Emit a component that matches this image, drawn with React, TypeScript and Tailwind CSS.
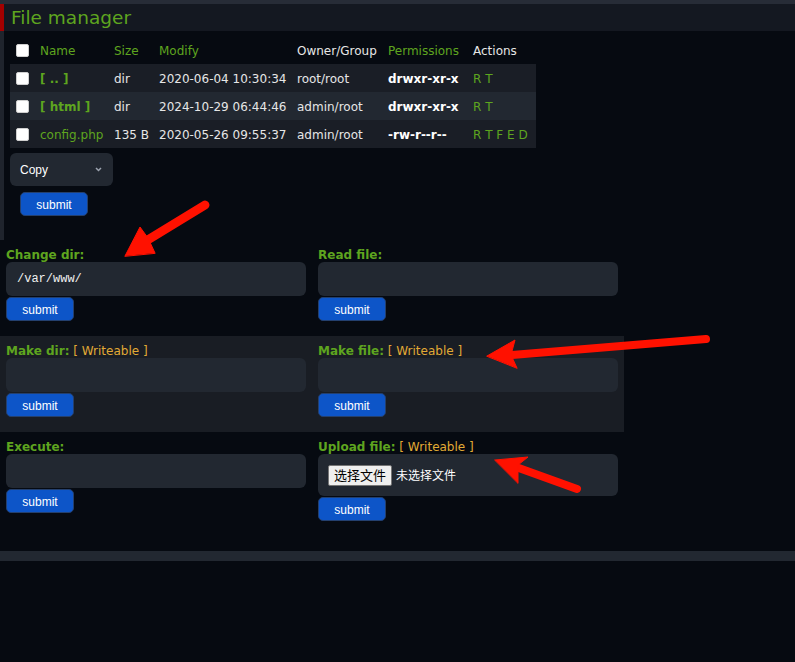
import React from "react";

const rows = [
  { name: "[ .. ]", dir: true, size: "dir", modify: "2020-06-04 10:30:34", owner: "root/root", perms: "drwxr-xr-x", actions: ["R", "T"] },
  { name: "[ html ]", dir: true, size: "dir", modify: "2024-10-29 06:44:46", owner: "admin/root", perms: "drwxr-xr-x", actions: ["R", "T"] },
  { name: "config.php", dir: false, size: "135 B", modify: "2020-05-26 09:55:37", owner: "admin/root", perms: "-rw-r--r--", actions: ["R", "T", "F", "E", "D"] },
];

const cols = "grid grid-cols-[24px_74px_45px_138px_91px_85px_69px] h-[28px] items-center pt-[2px]";

function Check() {
  return <span className="mx-auto -mt-[2px] block w-[13px] h-[13px] bg-white rounded-[2px] border border-[#cfcfcf]" />;
}

function Submit({ className = "" }: { className?: string }) {
  return (
    <button className={`w-[68px] h-[24px] pt-[2px] rounded-[5px] bg-[#0d55c8] border border-[#24406e] text-white text-[12px] font-['Liberation_Sans',sans-serif] ${className}`}>
      submit
    </button>
  );
}

function Field({ label, writeable, value, children }: { label: string; writeable?: boolean; value?: string; children?: React.ReactNode }) {
  return (
    <div className="pt-[6px] px-[6px]">
      <div className="h-[16px] leading-[18px] text-[12px]">
        <span className="font-bold text-[#5ea51f]">{label}</span>
        {writeable && <span className="text-[#e2aa35]"> [ Writeable ]</span>}
      </div>
      {children ?? (
        <div className="h-[34px] w-[300px] rounded-[6px] bg-[#222831] flex items-center pl-[11px] font-['Liberation_Mono',monospace] text-[12px] text-[#f0f0f0]">
          {value}
        </div>
      )}
      <Submit className="mt-[1px]" />
    </div>
  );
}

export default function App() {
  return (
    <div className="relative min-h-[662px] bg-[#060a11] font-['DejaVu_Sans',sans-serif] text-[12px] text-[#e6e6e6] overflow-hidden">
      <div className="h-[4px] bg-[#272c37]" />
      <div className="h-[27px] bg-[#141821] border-l-4 border-[#a30000] flex items-center pl-[7px] pt-[2px]">
        <h1 className="text-[18.5px] leading-none text-[#5ea51f]">File manager</h1>
      </div>

      <div className="border-l-4 border-[#1f242d] pl-[6px] pt-[5px] pb-[24px]">
        <div className="w-[526px]">
          <div className={cols}>
            <Check />
            <span className="pl-[6px] text-[#5ea51f]">Name</span>
            <span className="pl-[6px] text-[#5ea51f]">Size</span>
            <span className="pl-[6px] text-[#5ea51f]">Modify</span>
            <span className="pl-[6px]">Owner/Group</span>
            <span className="pl-[6px] text-[#5ea51f]">Permissions</span>
            <span className="pl-[6px]">Actions</span>
          </div>
          {rows.map((r, i) => (
            <div key={r.name} className={`${cols} ${i === 1 ? "bg-[#222831]" : "bg-[#1a1e26]"}`}>
              <Check />
              <span className={`pl-[6px] text-[#5ea51f] whitespace-nowrap ${r.dir ? "font-bold" : ""}`}>{r.name}</span>
              <span className="pl-[6px] whitespace-nowrap">{r.size}</span>
              <span className="pl-[6px] whitespace-nowrap">{r.modify}</span>
              <span className="pl-[6px] whitespace-nowrap">{r.owner}</span>
              <span className="pl-[6px] font-bold text-white whitespace-nowrap">{r.perms}</span>
              <span className="pl-[6px] text-[#5ea51f] whitespace-nowrap">{r.actions.join(" ")}</span>
            </div>
          ))}
        </div>

        <div className="mt-[5px] w-[103px] h-[33px] rounded-[6px] bg-[#222831] flex items-center justify-between pl-[10px] pr-[11px] font-['Liberation_Sans',sans-serif] text-[12px] text-white">
          <span>Copy</span>
          <svg width="7" height="5" viewBox="0 0 7 5">
            <polyline points="1,1 3.5,3.5 6,1" fill="none" stroke="#9ca3af" strokeWidth="1.5" />
          </svg>
        </div>
        <Submit className="mt-[6px] ml-[10px]" />
      </div>

      <div className="w-[624px]">
        <div className="grid grid-cols-2 h-[96px]">
          <Field label="Change dir:" value="/var/www/" />
          <Field label="Read file:" />
        </div>
        <div className="grid grid-cols-2 h-[96px] bg-[#191d24]">
          <Field label="Make dir:" writeable />
          <Field label="Make file:" writeable />
        </div>
        <div className="grid grid-cols-2 h-[96px]">
          <Field label="Execute:" />
          <Field label="Upload file:" writeable>
            <div className="h-[42px] w-[300px] rounded-[6px] bg-[#222831] flex items-center pl-[10px] gap-[4px] font-['Noto_Sans_CJK_SC',sans-serif]">
              <span className="h-[21px] px-[5px] flex items-center bg-[#efefef] border border-[#767676] rounded-[2px] text-[13px] text-black">选择文件</span>
              <span className="text-[12px] text-white">未选择文件</span>
            </div>
          </Field>
        </div>
      </div>

      <div className="mt-[23px] h-[10px] bg-[#222831]" />

      <svg className="absolute top-0 left-0 pointer-events-none" width="795" height="662" viewBox="0 0 795 662">
        <g fill="#ff1100" stroke="#ff1100" strokeLinecap="round">
          <line x1="205" y1="205" x2="146" y2="241" strokeWidth="9" />
          <polygon points="125,256 140,227 148,238 155,253" strokeWidth="1" />
          <line x1="706" y1="339" x2="512" y2="355" strokeWidth="8" />
          <polygon points="487,356 515,340 511,355 517,368" strokeWidth="1" />
          <line x1="577" y1="489" x2="516" y2="467" strokeWidth="8" />
          <polygon points="495,460 528,457 518,465 518,483" strokeWidth="1" />
        </g>
      </svg>
    </div>
  );
}
